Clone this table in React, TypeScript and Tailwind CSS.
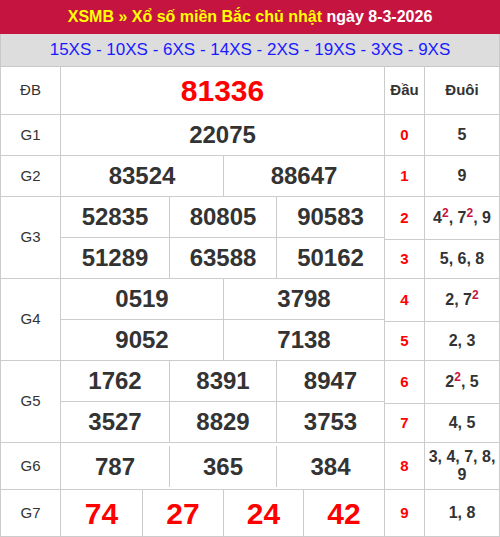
import { FunctionComponent, ReactNode } from "react";

const LEFT_BORDER = "border-[#cccccc]";

type Tail = { v: ReactNode; h: string };

const TAILS: Tail[] = [
  { v: "5", h: "h-[41px]" },
  { v: "9", h: "h-[41px]" },
  {
    v: (
      <>
        4<sup className="text-[#c5143f] text-[12px]">2</sup>, 7
        <sup className="text-[#c5143f] text-[12px]">2</sup>, 9
      </>
    ),
    h: "h-[43px]",
  },
  { v: "5, 6, 8", h: "h-[39px]" },
  {
    v: (
      <>
        2, 7<sup className="text-[#c5143f] text-[12px]">2</sup>
      </>
    ),
    h: "h-[43px]",
  },
  { v: "2, 3", h: "h-[39px]" },
  {
    v: (
      <>
        2<sup className="text-[#c5143f] text-[12px]">2</sup>, 5
      </>
    ),
    h: "h-[43px]",
  },
  { v: "4, 5", h: "h-[39px]" },
  { v: "3, 4, 7, 8, 9", h: "h-[47px]" },
  { v: "1, 8", h: "h-[47px]" },
];

const Label: FunctionComponent<{ text: string }> = ({ text }) => (
  <div className={`w-[60px] shrink-0 border-r ${LEFT_BORDER} flex items-center justify-center text-[15px] text-[#333]`}>
    {text}
  </div>
);

const Num: FunctionComponent<{ value: string; w?: string; last?: boolean }> = ({ value, w, last }) => (
  <div
    className={`${w ?? "flex-1"} ${last ? "" : `border-r ${LEFT_BORDER}`} flex items-center justify-center text-[24px] font-bold text-[#333]`}
  >
    {value}
  </div>
);

const G3W = ["w-[109px]", "w-[107px]", undefined];
const G2W = ["w-[163px]", undefined];

const App: FunctionComponent = () => (
  <div className="w-[500px] bg-white font-['Liberation_Sans',Arial,sans-serif]">
    <div className="h-[34px] bg-[#c5143f] flex items-center justify-center text-[16px] font-bold">
      <span className="text-[#ffff00]">XSMB » Xổ số miền Bắc chủ nhật</span>
      <span className="text-white">&nbsp;ngày 8-3-2026</span>
    </div>
    <div className="h-[33px] bg-[#dddddd] border-x border-b border-[#c8c8c8] flex items-center justify-center text-[17px] text-[#1a1aff]">
      15XS - 10XS - 6XS - 14XS - 2XS - 19XS - 3XS - 9XS
    </div>

    <div className="flex">
      {/* left table */}
      <div className={`w-[385px] border-x ${LEFT_BORDER}`}>
        <div className={`h-[48px] flex border-b ${LEFT_BORDER}`}>
          <Label text="ĐB" />
          <div className="flex-1 flex items-center justify-center text-[30px] font-bold text-[#ff0000]">
            81336
          </div>
        </div>
        <div className={`h-[41px] flex border-b ${LEFT_BORDER}`}>
          <Label text="G1" />
          <Num value="22075" last />
        </div>
        <div className={`h-[41px] flex border-b ${LEFT_BORDER}`}>
          <Label text="G2" />
          <Num value="83524" w={G2W[0]} />
          <Num value="88647" last />
        </div>
        {[
          { label: "G3", rows: [["52835", "80805", "90583"], ["51289", "63588", "50162"]] },
          { label: "G4", rows: [["0519", "3798"], ["9052", "7138"]] },
          { label: "G5", rows: [["1762", "8391", "8947"], ["3527", "8829", "3753"]] },
        ].map((g) => (
          <div key={g.label} className={`h-[82px] flex border-b ${LEFT_BORDER}`}>
            <Label text={g.label} />
            <div className="flex-1 flex flex-col">
              {g.rows.map((r, ri) => (
                <div key={ri} className={`flex ${ri === 0 ? `h-[41px] border-b ${LEFT_BORDER}` : "flex-1"}`}>
                  {r.map((n, i) => (
                    <Num
                      key={n}
                      value={n}
                      w={r.length === 3 ? G3W[i] : G2W[i]}
                      last={i === r.length - 1}
                    />
                  ))}
                </div>
              ))}
            </div>
          </div>
        ))}
        <div className={`h-[47px] flex border-b ${LEFT_BORDER}`}>
          <Label text="G6" />
          {["787", "365", "384"].map((n, i) => (
            <div key={n} className={`${G3W[i] ?? "flex-1"} flex pt-[3px] pb-[2px]`}>
              <div
                className={`flex-1 flex items-center justify-center text-[24px] font-bold text-[#333] ${
                  i < 2 ? `border-r ${LEFT_BORDER}` : ""
                }`}
              >
                {n}
              </div>
            </div>
          ))}
        </div>
        <div className={`h-[47px] flex border-b ${LEFT_BORDER}`}>
          <Label text="G7" />
          {["74", "27", "24", "42"].map((n, i) => (
            <div
              key={n}
              className={`${["w-[82px]", "w-[81px]", "w-[80px]", "flex-1"][i]} ${
                i < 3 ? `border-r ${LEFT_BORDER}` : ""
              } flex items-center justify-center text-[30px] font-bold text-[#ff0000]`}
            >
              {n}
            </div>
          ))}
        </div>
      </div>

      {/* right table: Đầu / Đuôi */}
      <div className={`w-[115px] border-r ${LEFT_BORDER}`}>
        <div className={`h-[48px] flex border-b ${LEFT_BORDER} text-[15px] font-bold text-[#333]`}>
          <div className={`w-[40px] border-r ${LEFT_BORDER} flex items-center justify-center`}>Đầu</div>
          <div className="flex-1 flex items-center justify-center">Đuôi</div>
        </div>
        {TAILS.map((t, i) => (
          <div key={i} className={`${t.h} flex border-b ${LEFT_BORDER}`}>
            <div
              className={`w-[40px] border-r ${LEFT_BORDER} flex items-center justify-center text-[15px] font-bold text-[#ff0000]`}
            >
              {i}
            </div>
            <div className="flex-1 flex items-center justify-center px-[2px] text-center text-[16px] leading-[18px] font-bold text-[#333]">
              <span>{t.v}</span>
            </div>
          </div>
        ))}
      </div>
    </div>
  </div>
);

export default App;
